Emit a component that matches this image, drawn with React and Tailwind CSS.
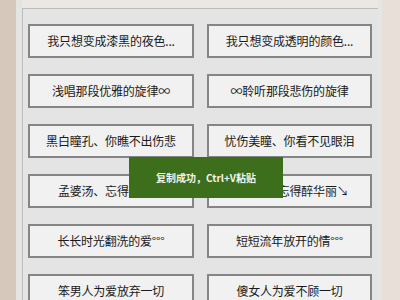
import React from "react";

const rows = [
  ["我只想变成漆黑的夜色...", "我只想变成透明的颜色..."],
  ["浅唱那段优雅的旋律∞", "∞聆听那段悲伤的旋律"],
  ["黑白瞳孔、你瞧不出伤悲", "忧伤美瞳、你看不见眼泪"],
  ["孟婆汤、忘得醉繁华", "孟婆汤、忘得醉华丽↘"],
  ["长长时光翻洗的爱°°°", "短短流年放开的情°°°"],
  ["笨男人为爱放弃一切", "傻女人为爱不顾一切"],
];

export default function App() {
  return (
    <div
      className="relative flex h-[300px] w-[400px] overflow-hidden bg-[#d8ccc0]"
      style={{ fontFamily: '"Noto Sans CJK SC", "Noto Sans", sans-serif' }}
    >
      <div className="w-[16px] shrink-0 bg-[#d6c9bc]" />
      <div className="w-[6px] shrink-0 bg-[#e2e5e1]" />
      <div className="flex w-[356px] shrink-0 flex-col bg-[#ebe7e3]">
        <div className="h-[8px] shrink-0" />
        <div className="flex-1 border-l border-t border-[#bcbcbc] bg-[#e4e4e4] pl-[5px] pt-[15px]">
          <div className="grid grid-cols-[166px_165px] gap-x-[13px] gap-y-[16px]">
            {rows.flatMap((r, i) =>
              r.map((t, j) => (
                <div
                  key={i + "-" + j}
                  className="flex h-[34px] items-center justify-center border-2 border-[#858585] bg-[#f1f1f1] text-[12px] leading-none tracking-[-0.2px] text-[#1a1a1a]"
                >
                  {t}
                </div>
              ))
            )}
          </div>
        </div>
      </div>
      <div className="w-[4px] shrink-0 bg-[#e4e6e3]" />
      <div className="flex-1 bg-[#e7dfd8]" />

      <div className="absolute left-[129px] top-[157px] flex h-[41px] w-[154px] items-center justify-center bg-[#3c6e1c] text-[10px] font-bold text-[#f4f4ec]">
        复制成功，Ctrl+V粘贴
      </div>
    </div>
  );
}
